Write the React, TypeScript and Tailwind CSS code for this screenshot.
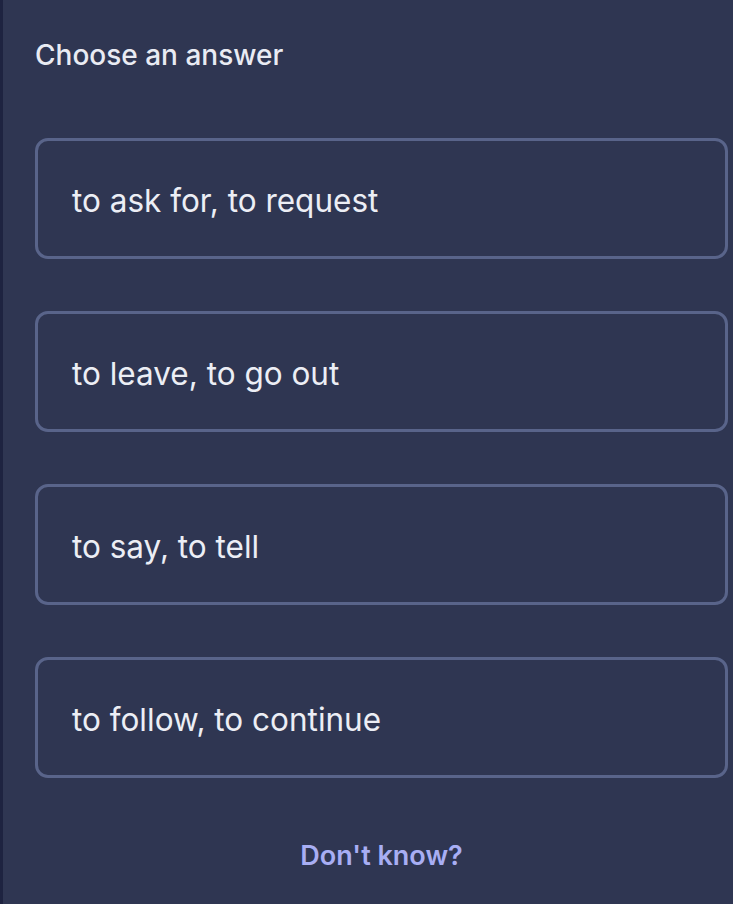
const OPTIONS = [
  'to ask for, to request',
  'to leave, to go out',
  'to say, to tell',
  'to follow, to continue',
];

export default function App() {
  return (
    <div className="flex min-h-[904px] w-[733px] bg-[#2f3652] font-['Inter',sans-serif]">
      <div className="w-[3px] shrink-0 bg-[#1e2340]" />
      <div className="flex-1 pl-[32px] pr-[5px] pt-[36px]">
        <h2 className="text-[28px] font-medium leading-[38px] text-[#e9ebf3]">Choose an answer</h2>

        <div className="mt-[64px] flex flex-col gap-[52px]">
          {OPTIONS.map(opt => (
            <button
              key={opt}
              className="flex h-[121px] items-center rounded-[13px] border-[3px] border-[#59648a] pl-[34px] pt-[4px] text-left text-[31.5px] text-[#eceef5]"
            >
              {opt}
            </button>
          ))}
        </div>

        <div className="mt-[58px] text-center text-[27px] font-semibold text-[#a8aef4]">Don't know?</div>
      </div>
    </div>
  );
}
